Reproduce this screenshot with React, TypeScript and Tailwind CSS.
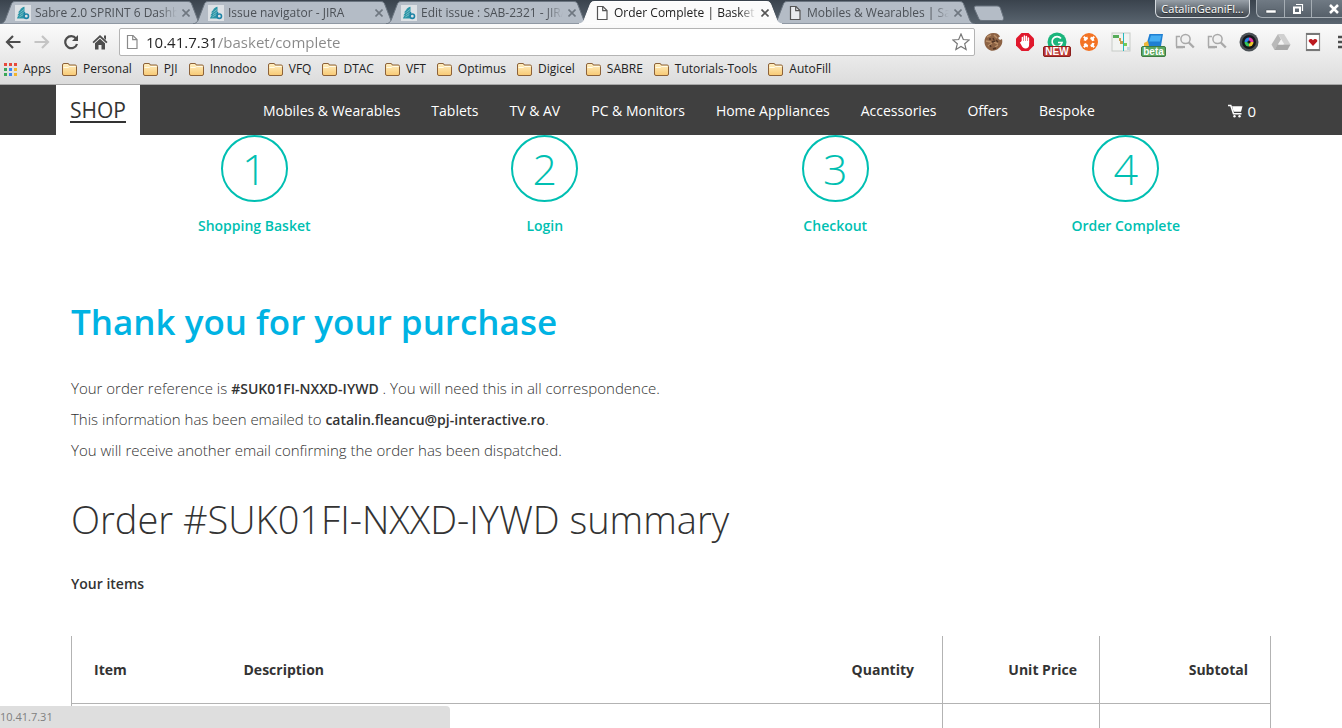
import type { ReactNode } from "react";

function PageIcon({ className = "" }: { className?: string }) {
  return (
    <svg viewBox="0 0 16 16" className={"size-4 shrink-0 " + className} aria-hidden="true">
      <path d="M3.500 1.500h5.500l4 4v9h-9.500z" fill="#fff" fillOpacity="0.7" stroke="currentColor" strokeWidth="1.2" />
      <path d="M8.700 1.500v4.200h4.300" fill="none" stroke="currentColor" strokeWidth="1.2" />
    </svg>
  );
}

function JiraIcon() {
  return (
    <svg viewBox="0 0 16 16" className="size-4 shrink-0" aria-hidden="true">
      <rect width="16" height="16" fill="#dde1e5" />
      <path d="M2 13.500H9.500V1.800C8 2 6 3.200 4.800 4.800L6 4.600C4.500 5.500 3.600 6.600 3.300 7.800L4.800 7.400C3.500 8.400 2.800 9.300 2.500 10.500L4 10.200C2.800 11.200 2.200 12.300 2 13.500z" fill="#2b95a6" />
      <path d="M5.300 7.300 9 4.500M4.800 9.800 9 7M4.300 12l4.200-2.500" stroke="#a5d5dc" strokeWidth="0.6" />
      <path d="M9.500 7v4" stroke="#1d84a6" strokeWidth="1.500" />
      <circle cx="11.300" cy="11.200" r="2.200" fill="#dde1e5" stroke="#1d84a6" strokeWidth="1.600" />
    </svg>
  );
}

type TabProps = { title: string; jira?: boolean; active?: boolean };

function BrowserTab({ title, jira, active }: TabProps) {
  return (
    <div className={"relative h-6 w-[193px] min-w-0 shrink " + (active ? "z-10" : "")}>
      <svg
        viewBox="0 0 204 24"
        preserveAspectRatio="none"
        className="absolute top-0 left-0 h-6 w-[204px]"
        aria-hidden="true"
      >
        <path
          d="M0 24C4 23 5 21 6 18L11 5C12 2 13 1.500 16 1.500H187C190 1.500 191 2 192 5L197 18C198 21 199 23 203 24Z"
          fill={active ? "#fbfbfb" : "#b4bcc6"}
          stroke={active ? "#fff" : "#6b7580"}
          strokeWidth="1"
        />
      </svg>
      <div className="relative flex h-full items-center gap-1 pt-0.5 pl-[15px]">
        {jira ? <JiraIcon /> : <PageIcon className="text-[#555]" />}
        <button
          type="button"
          className={
            "w-[142px] overflow-hidden text-left text-[12px] leading-4 whitespace-nowrap [mask-image:linear-gradient(to_right,black_88%,transparent)] " +
            (active ? "text-[#222]" : "text-[#4c5157]")
          }
        >
          {title}
        </button>
        <button type="button" aria-label="Close tab" className="shrink-0 p-px">
          <svg viewBox="0 0 8 8" className="size-2" aria-hidden="true">
            <path d="M.5.5l7 7M7.500.5l-7 7" stroke={active ? "#555" : "#6f7780"} strokeWidth="1.600" />
          </svg>
        </button>
      </div>
    </div>
  );
}

function Folder() {
  return (
    <svg viewBox="0 0 15 13" className="h-[13px] w-[15px] shrink-0" aria-hidden="true">
      <defs>
        <linearGradient id="folder" x1="0" y1="0" x2="0" y2="1">
          <stop offset="0" stopColor="#fff0c4" />
          <stop offset="1" stopColor="#f8c973" />
        </linearGradient>
      </defs>
      <path
        d="M.5 2Q.5.5 2 .5h4Q7 .5 7.200 2h6Q14.500 2 14.500 3.500V11Q14.500 12.500 13 12.500H2Q.5 12.500.5 11Z"
        fill="url(#folder)"
        stroke="#8d6239"
      />
      <path d="M1.500 4.500h4.700l1.300-1h6" fill="none" stroke="#fffbe8" />
    </svg>
  );
}

const bookmarks = [
  "Personal",
  "PJI",
  "Innodoo",
  "VFQ",
  "DTAC",
  "VFT",
  "Optimus",
  "Digicel",
  "SABRE",
  "Tutorials-Tools",
  "AutoFill",
];

const appColors = [
  "#e64a3c", "#e64a3c", "#e64a3c",
  "#3aa757", "#3f86f0", "#f3b52c",
  "#3aa757", "#3f86f0", "#f3b52c",
];

function IconButton({ label, children }: { label: string; children: ReactNode }) {
  return (
    <button type="button" aria-label={label} className="relative grid size-5 shrink-0 place-items-center">
      {children}
    </button>
  );
}

function NavIcon({ children, color = "#4d4d4d" }: { children: ReactNode; color?: string }) {
  return (
    <svg viewBox="0 0 16 16" className="size-4" fill="none" stroke={color} strokeWidth="2.200" aria-hidden="true">
      {children}
    </svg>
  );
}

function PageSearch() {
  return (
    <svg viewBox="0 0 20 20" className="size-5" fill="none" stroke="#a9a9a9" strokeWidth="1.500" aria-hidden="true">
      <path d="M5 4.500H1.500v10M8 15.500H1" />
      <path d="M1 15h9" strokeWidth="2.200" />
      <circle cx="10.500" cy="7" r="4.600" fill="#f1f1f1" />
      <path d="M13.800 10.500l5 5" strokeWidth="2.400" />
    </svg>
  );
}

function Extensions() {
  return (
    <div className="flex w-[359px] shrink-0 items-center gap-3">
      <IconButton label="Cookies">
        <svg viewBox="0 0 20 20" className="size-5" aria-hidden="true">
          <path d="M10 1C14 .7 16 2.500 17 4.500L15 6l2 2 2-1c1 4-.5 7-3 9-3 3-8 4-11 1C1 14 .5 8 3 4.500 5 2 7 1.200 10 1z" fill="#8c6244" />
          <path d="M4 5l4-2M11 3l3 3M3 9l5 1M11 10l4 2M5 14l4-3M12 15l3-2" stroke="#b98e67" strokeWidth="1.500" />
          <path d="M6 7h2M13 8l2 2M7 13l1 2M10 6l1 2M10 17l3-1M9 10l3-1" stroke="#503525" strokeWidth="1.400" />
        </svg>
      </IconButton>
      <IconButton label="Ad blocker">
        <svg viewBox="0 0 20 20" className="size-5" aria-hidden="true">
          <path d="M6.500 1h7L19 6.500v7L13.500 19h-7L1 13.500v-7z" fill="#e0182d" />
          <path d="M7.400 10V5.500M9.400 9.500V4M11.400 9.500V4.500M13.400 10.500V6" stroke="#fff" strokeWidth="1.500" strokeLinecap="round" />
          <path d="M6.700 9h7.400v4c0 2-1.500 3.500-3.500 3.500-2.300 0-3.300-1.500-4.300-3.500L4.800 10.500l1-.6z" fill="#fff" />
        </svg>
      </IconButton>
      <IconButton label="Grammar check">
        <svg viewBox="0 0 20 20" className="size-5" aria-hidden="true">
          <circle cx="10" cy="10" r="9.500" fill="#1bb57c" />
          <path d="M14 6.500A5 5 0 1 0 15 10.500h-4" fill="none" stroke="#fff" strokeWidth="1.700" />
        </svg>
        <span className="absolute top-3.5 -left-1 h-[11px] w-7 rounded-xs border border-[#8c1f1d] bg-[#b93632] text-center font-['Liberation_Sans',sans-serif] text-[10px] leading-[9px] font-bold text-white">
          NEW
        </span>
      </IconButton>
      <IconButton label="Support">
        <svg viewBox="0 0 20 20" className="size-5" aria-hidden="true">
          <circle cx="10" cy="10" r="9" fill="#f37324" />
          <circle cx="10" cy="10" r="4.500" fill="none" stroke="#fff" strokeWidth="2.600" strokeDasharray="4.070 3" strokeDashoffset="-1.500" transform="rotate(-6 10 10)" />
          <path d="M4.800 4.800l2 2M15.200 4.800l-2 2M4.800 15.200l2-2M15.200 15.200l-2-2" stroke="#fff" strokeWidth="2" />
        </svg>
      </IconButton>
      <IconButton label="Gantt">
        <svg viewBox="0 0 20 20" className="size-5" aria-hidden="true">
          <rect x="1" y="1" width="18" height="18" fill="#f1f3f1" stroke="#c7cbc7" />
          <path d="M2 3h6v3H2z" fill="#56ac59" />
          <path d="M8 6h2v3h2v3H9V9H8z" fill="#c79e48" />
          <path d="M13 11h3v3h-3z" fill="#75cc53" />
          <path d="M16 15h3v3h-3z" fill="#c2d6de" />
          <path d="M12.500 1v18" stroke="#25b9bd" />
        </svg>
      </IconButton>
      <IconButton label="Drive beta">
        <svg viewBox="0 0 20 20" className="size-5" aria-hidden="true">
          <path d="M6.500 2H20l-2 12H3z" fill="#1f7fd2" />
          <path d="M8 3.500h10.500l-1.500 6H6z" fill="#46aef2" />
          <path d="M1 11l4-2 1 5-5 1z" fill="#f1b73a" />
        </svg>
        <span className="absolute top-3.5 -left-0.5 h-[11px] w-[25px] rounded-xs border border-[#3e7b43] bg-[#5ca862] text-center font-['Liberation_Sans',sans-serif] text-[10px] leading-[9px] font-bold text-white">
          beta
        </span>
      </IconButton>
      <IconButton label="Find in page"><PageSearch /></IconButton>
      <IconButton label="Find in site"><PageSearch /></IconButton>
      <IconButton label="Camera">
        <svg viewBox="0 0 20 20" className="size-5" aria-hidden="true">
          <circle cx="10" cy="10" r="9.500" fill="#4a5055" />
          <circle cx="10" cy="10" r="7" fill="#15171a" />
          <path d="M10 10V5.500A4.500 4.500 0 0 1 14.500 10z" fill="#e63ba8" />
          <path d="M10 10h4.500A4.500 4.500 0 0 1 10 14.500z" fill="#f0c62a" />
          <path d="M10 10v4.500A4.500 4.500 0 0 1 5.500 10z" fill="#35c55c" />
          <path d="M10 10H5.500A4.500 4.500 0 0 1 10 5.500z" fill="#2a86e6" />
          <circle cx="10" cy="10" r="1.600" fill="#15171a" />
        </svg>
      </IconButton>
      <IconButton label="Drive">
        <svg viewBox="0 0 20 20" className="size-5" aria-hidden="true">
          <path d="M7 2h6l6.500 10.500h-6z" fill="#d0d0d0" />
          <path d="M7 2l3 5.500L3.500 18 .5 12.500z" fill="#b9b9b9" />
          <path d="M6.500 12.500h13l-3 5.500h-13z" fill="#a8a8a8" />
          <path d="M10 8l2.700 4.500H7.200z" fill="#f3f3f3" />
        </svg>
      </IconButton>
      <IconButton label="Cards">
        <svg viewBox="0 0 20 20" className="size-5" aria-hidden="true">
          <rect x="3.500" y="1.500" width="13" height="17" fill="#fff" stroke="#8c8c8c" strokeWidth="1.200" />
          <path d="M3 2h14M3 18h14" stroke="#777" strokeWidth="2" />
          <path d="M10 14L5.800 9.500C5 7 8.500 6 10 8.300 11.500 6 15 7 14.200 9.500z" fill="#bd1a20" />
        </svg>
      </IconButton>
      <button type="button" aria-label="Menu" className="w-[7px] shrink-0 overflow-hidden">
        <svg viewBox="0 0 7 20" className="h-5 w-[7px]" aria-hidden="true">
          <path d="M3 5h4M3 10h4M3 15h4" stroke="#4d4d4d" strokeWidth="2.500" />
        </svg>
      </button>
    </div>
  );
}

function Browser() {
  return (
    <header className="shrink-0">
      <div className="flex h-6 justify-between bg-linear-to-b from-[#3a434d] to-[#5a6570]">
        <div className="flex min-w-0">
          <div className="flex min-w-0">
            <BrowserTab title="Sabre 2.0 SPRINT 6 Dashboard" jira />
            <BrowserTab title="Issue navigator - JIRA" jira />
            <BrowserTab title="Edit issue : SAB-2321 - JIRA" jira />
            <BrowserTab title="Order Complete | Basket | S" active />
            <BrowserTab title="Mobiles & Wearables | Samsung" />
          </div>
          <button type="button" aria-label="New tab" className="ml-2 shrink-0 pt-0.5">
            <svg viewBox="0 0 32 16" className="h-4 w-8" aria-hidden="true">
              <path d="M3 1h21c2 0 3 1 3.500 2.500l3 9c.5 2-.5 3-2 3H9c-2 0-3-1-3.500-2.500L1.500 4C1 2 1.500 1 3 1z" fill="#b4bcc6" stroke="#69737e" />
            </svg>
          </button>
        </div>
        <div className="flex shrink-0 items-start gap-1.5">
          <button
            type="button"
            className="h-[18px] w-[95px] rounded-b-md border border-t-0 border-[#d5dade] bg-linear-to-b from-[#98a0a8] to-[#3e464e] text-[11px] leading-4 text-white [text-shadow:0_1px_1px_#222]"
          >
            CatalinGeaniFl...
          </button>
          <div className="flex h-[18px] w-[86px] overflow-hidden rounded-bl-md border border-t-0 border-r-0 border-[#a5adb4] bg-linear-to-b from-[#707a84] to-[#56606a]">
            <button type="button" aria-label="Minimize" className="grid w-7 shrink-0 place-items-center border-r border-[#a5adb4]">
              <svg viewBox="0 0 12 12" className="size-3" aria-hidden="true"><path d="M1 7h10v3H1z" fill="#fff" stroke="#3f464d" strokeWidth="0.500" /></svg>
            </button>
            <button type="button" aria-label="Restore" className="grid w-[27px] shrink-0 place-items-center border-r border-[#a5adb4]">
              <svg viewBox="0 0 12 12" className="size-3" fill="none" stroke="#fff" aria-hidden="true">
                <path d="M4 1.500h6.500V8" strokeWidth="1.200" />
                <path d="M2 4.500h6v5.500H2z" strokeWidth="2" />
              </svg>
            </button>
            <button type="button" aria-label="Close window" className="grid w-11 shrink-0 place-items-center">
              <svg viewBox="0 0 12 12" className="size-3" aria-hidden="true"><path d="M2 2l8 8M10 2l-8 8" stroke="#fff" strokeWidth="2.500" /></svg>
            </button>
          </div>
        </div>
      </div>

      <div className="border-b border-[#a6a6a6] bg-linear-to-b from-[#fbfbfb] to-[#dcdcdc]">
        <div className="flex h-[34px] items-center pt-0.5 pl-[5px]">
          <div className="flex shrink-0 items-center gap-[13px]">
            <button type="button" aria-label="Back">
              <NavIcon><path d="M15.500 8H2M8 2L2 8l6 6" /></NavIcon>
            </button>
            <button type="button" aria-label="Forward">
              <NavIcon color="#c4c4c4"><path d="M.5 8H14M8 2l6 6-6 6" /></NavIcon>
            </button>
            <button type="button" aria-label="Reload">
              <NavIcon>
                <path d="M13 4.500A6 6 0 1 0 14 10" />
                <path d="M15 1v6H9z" fill="#4d4d4d" stroke="none" />
              </NavIcon>
            </button>
            <button type="button" aria-label="Home">
              <svg viewBox="0 0 16 16" className="size-4" fill="#4d4d4d" aria-hidden="true">
                <path d="M8 1l7.500 7-1.200 1.200L8 3.500 1.700 9.200.5 8zM12 1.500h2V6l-2-2z" />
                <path d="M8 4.800l5 4.500V15.500H9.500V11h-3v4.500H3V9.300z" />
              </svg>
            </button>
          </div>
          <form className="ml-[11px] flex h-7 min-w-0 flex-1 items-center rounded-xs border border-[#b4b4b4] bg-white px-1">
            <PageIcon className="text-[#8a8a8a]" />
            <div className="min-w-0 flex-1 pl-1.5 text-[15px] leading-5">
              <input
                aria-label="Address"
                defaultValue="10.41.7.31/basket/complete"
                className="w-full bg-linear-to-r from-[#222] from-[72px] to-[#888] to-[72px] bg-clip-text text-transparent outline-none"
              />
            </div>
            <button type="button" aria-label="Bookmark this page">
              <svg viewBox="0 0 18 18" className="size-[18px]" fill="none" stroke="#777" strokeWidth="1.200" aria-hidden="true">
                <path d="M9 1l2.300 5.500 5.900.5-4.500 3.800 1.400 5.700L9 13.400l-5.100 3.100 1.400-5.700L.8 7l5.900-.5z" />
              </svg>
            </button>
          </form>
          <div className="w-2 shrink-0" />
          <Extensions />
        </div>
        <nav aria-label="Bookmarks" className="flex h-[26px] items-center gap-[11px] pb-1 pl-1 text-[12px] leading-4 text-[#222]">
          <a href="#apps" className="flex items-center gap-1.5">
            <svg viewBox="0 0 13 13" className="size-[13px]" aria-hidden="true">
              {appColors.map((c, i) => (
                <rect key={i} x={(i % 3) * 5} y={Math.floor(i / 3) * 5} width="3" height="3" fill={c} />
              ))}
            </svg>
            Apps
          </a>
          {bookmarks.map((b) => (
            <a key={b} href="#bookmark" className="flex items-center gap-1.5 whitespace-nowrap">
              <Folder />
              {b}
            </a>
          ))}
        </nav>
      </div>
    </header>
  );
}

const categories = [
  "Mobiles & Wearables",
  "Tablets",
  "TV & AV",
  "PC & Monitors",
  "Home Appliances",
  "Accessories",
  "Offers",
  "Bespoke",
];

const steps = ["Shopping Basket", "Login", "Checkout", "Order Complete"];

export default function App() {
  return (
    <div className="flex h-screen flex-col overflow-hidden bg-white font-['Open_Sans','Noto_Sans',sans-serif] text-[#333]">
      <Browser />

      <div className="shrink-0 bg-[#404040]">
        <div className="mx-auto flex h-[50px] max-w-[1230px] items-center">
          <a href="#shop" className="flex h-full w-[84px] items-center justify-center bg-white text-[21px] leading-7 underline decoration-2 underline-offset-3">
            SHOP
          </a>
          <nav aria-label="Categories" className="ml-[123px] flex gap-[31px] pt-0.5 text-[14px] leading-5 whitespace-nowrap text-white">
            {categories.map((c) => (
              <a key={c} href="#category">{c}</a>
            ))}
          </nav>
          <a href="#basket" className="mr-[30px] ml-auto flex items-center gap-1 pt-0.5 text-[15px] leading-5 text-white">
            <svg viewBox="0 0 15 14" className="h-3.5 w-[15px]" aria-hidden="true">
              <path d="M0 1.500h2.800L5.500 9.700h8" fill="none" stroke="#fff" strokeWidth="1.500" />
              <path d="M4 2.300h10.500L13 7.800H5.700z" fill="#fff" />
              <circle cx="6.500" cy="12.300" r="1.200" fill="#fff" />
              <circle cx="11.500" cy="12.300" r="1.200" fill="#fff" />
            </svg>
            0
          </a>
        </div>
      </div>

      <main className="min-h-0 flex-1 overflow-hidden">
        <div className="mx-auto max-w-[1230px] px-[15px]">
          <ol className="grid grid-cols-4 pl-[38px] text-[#00bfb2]">
            {steps.map((s, i) => (
              <li key={s} className="flex flex-col items-center">
                <span className="grid size-[67px] place-items-center rounded-full border-2 border-current text-[43px] leading-[60px] font-light">
                  {i + 1}
                </span>
                <span className="mt-3 text-[14px] leading-6 font-semibold">{s}</span>
              </li>
            ))}
          </ol>

          <h1 className="mt-[59px] text-[35px] leading-[50px] font-semibold text-[#00b3e3]">Thank you for your purchase</h1>

          <div className="mt-[26px] text-[15px] leading-[31px] font-light">
            <p>
              Your order reference is <strong className="text-[14px] font-semibold">#SUK01FI-NXXD-IYWD</strong> . You will need this in all
              correspondence.
            </p>
            <p>
              This information has been emailed to{" "}
              <strong className="text-[14px] font-semibold">catalin.fleancu@pj-interactive.ro</strong>.
            </p>
            <p>You will receive another email confirming the order has been dispatched.</p>
          </div>

          <h2 className="mt-[27px] text-[38px] leading-[52px] font-light">Order #SUK01FI-NXXD-IYWD summary</h2>
          <h3 className="mt-[29px] text-[14px] leading-5 font-semibold">Your items</h3>

          <table className="mt-[42px] w-full table-fixed border-collapse border-x border-[#b3b3b3] text-[14px] leading-5">
            <thead>
              <tr className="h-[67px] border-b border-[#b3b3b3]">
                <th scope="col" className="w-[150px] pt-0.5 pl-[22px] text-left">Item</th>
                <th scope="col" className="pt-0.5 pl-[22px] text-left">Description</th>
                <th scope="col" className="w-[150px] border-r border-[#b3b3b3] pt-0.5 pr-7 text-right">Quantity</th>
                <th scope="col" className="w-[157px] border-r border-[#b3b3b3] pt-0.5 pr-[22px] text-right">Unit Price</th>
                <th scope="col" className="w-[171px] pt-0.5 pr-[22px] text-right">Subtotal</th>
              </tr>
            </thead>
            <tbody>
              <tr className="h-20">
                <td />
                <td />
                <td className="border-r border-[#b3b3b3]" />
                <td className="border-r border-[#b3b3b3]" />
                <td />
              </tr>
            </tbody>
          </table>
        </div>
      </main>

      <div className="fixed bottom-0 left-0 h-[22px] w-[450px] rounded-tr-sm bg-[#dedede] text-[11px] leading-[22px] text-[#808080]">
        10.41.7.31
      </div>
    </div>
  );
}
